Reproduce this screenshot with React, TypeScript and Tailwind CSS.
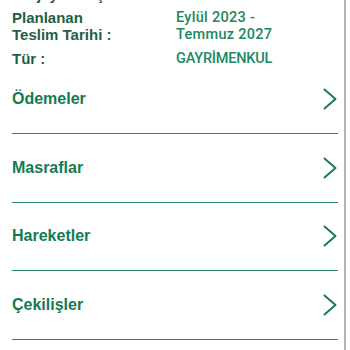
import React from 'react';

const rows = ['Ödemeler', 'Masraflar', 'Hareketler', 'Çekilişler'];

const Chevron: React.FC = () => (
    <svg width="14" height="22" viewBox="0 0 14 22" fill="none" className="shrink-0">
        <polyline points="1.5,1.5 12.5,11 1.5,20.5" stroke="#1b7a52" strokeWidth="2" strokeLinecap="round" strokeLinejoin="round" />
    </svg>
);

const App: React.FC = () => {
    const label = 'text-[15px] leading-[17px] font-bold text-[#1f5e47] font-["Liberation_Sans",Arial,sans-serif]';
    const value = 'text-[14.5px] leading-[17px] font-medium text-[#1b8a5e] font-["Roboto","Liberation_Sans",sans-serif]';

    return (
        <div className="w-[350px] h-[350px] overflow-hidden bg-white flex">
            <div className="w-[344px] flex flex-col">
                <div className="pl-3 grid grid-cols-[164px_1fr] gap-y-[6.5px] -mt-[14.5px]">
                    <div className={label}>Projeye Giriş :</div>
                    <div className={value}>AKTİF</div>
                    <div className={label}>
                        Planlanan<br />Teslim Tarihi :
                    </div>
                    <div className={value + ' tracking-[0.3px]'}>
                        Eylül 2023 -<br />Temmuz 2027
                    </div>
                    <div className={label}>Tür :</div>
                    <div className={value + ' tracking-[-0.2px]'}>GAYRİMENKUL</div>
                </div>
                <div className="ml-3 mr-[6px] -mt-[1px]">
                    {rows.map((r) => (
                        <div key={r} className="h-[68.5px] border-b border-[#2a8a62] flex items-center justify-between pr-[1px]">
                            <span className='text-[16px] font-bold text-[#147a52] font-["Liberation_Sans",Arial,sans-serif]'>{r}</span>
                            <Chevron />
                        </div>
                    ))}
                </div>
            </div>
            <div className="w-[2px] h-full bg-[#b4b4b4]" />
        </div>
    );
};

export default App;
